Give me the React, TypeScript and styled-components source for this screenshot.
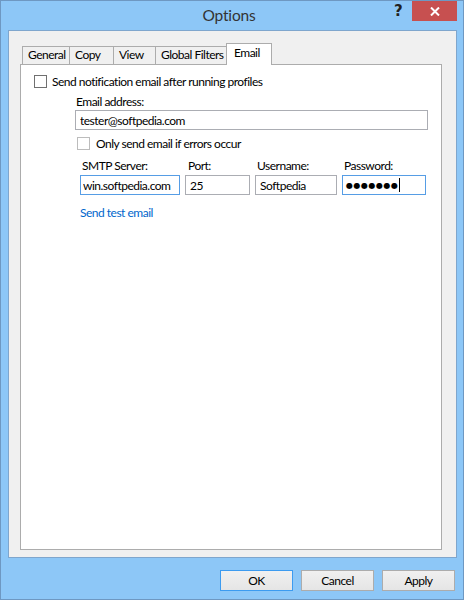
import React from "react";
import styled, { createGlobalStyle } from "styled-components";

const Global = createGlobalStyle`
  html, body { margin: 0; padding: 0; }
  body { font-family: Lato, "Noto Sans", sans-serif; font-size: 12px; letter-spacing: -0.5px; color: #000; }
  * { box-sizing: border-box; }
`;

const Window = styled.div`
  width: 464px;
  height: 600px;
  background: #8dc7f7;
  border: 1px solid #6e98c2;
  display: flex;
  flex-direction: column;
`;

const TitleBar = styled.div`
  height: 29px;
  flex: none;
  display: grid;
  grid-template-columns: 1fr auto 1fr;
  padding-right: 6px;
`;

const Title = styled.div`
  grid-column: 2;
  font-size: 15.5px;
  letter-spacing: -0.2px;
  line-height: 29px;
  color: #333;
`;

const Controls = styled.div`
  grid-column: 3;
  display: flex;
  justify-content: flex-end;
  align-items: flex-start;
`;

const HelpButton = styled.div`
  width: 28px;
  height: 20px;
  display: flex;
  align-items: center;
  justify-content: center;
  font-weight: bold;
  font-size: 15px;
  color: #222;
  font-family: "DejaVu Sans", sans-serif;
`;

const CloseButton = styled.div`
  width: 45px;
  height: 20px;
  background: #c75050;
  display: flex;
  align-items: center;
  justify-content: center;
`;

const Client = styled.div`
  margin-left: 7px;
  width: 449px;
  height: 528px;
  flex: none;
  background: #f0f0f0;
  border: 1px solid #7fa6cd;
  padding: 12px 14px 7px 11px;
  display: flex;
  flex-direction: column;
`;

const TabRow = styled.div`
  display: flex;
  align-items: flex-end;
  height: 21px;
  padding-left: 2px;
  flex: none;
`;

const Tab = styled.div<{ $w: number; $active?: boolean }>`
  width: ${(p) => p.$w}px;
  height: ${(p) => (p.$active ? 22 : 18)}px;
  margin-bottom: ${(p) => (p.$active ? -1 : 0)}px;
  margin-left: -1px;
  &:first-child { margin-left: 0; }
  background: ${(p) => (p.$active ? "#fff" : "#f0f0f0")};
  border: 1px solid #acacac;
  border-bottom: none;
  position: relative;
  z-index: ${(p) => (p.$active ? 1 : 0)};
  padding-left: ${(p) => (p.$active ? 7 : 5)}px;
  padding-top: ${(p) => (p.$active ? 1 : 0)}px;
  line-height: 16px;
  white-space: nowrap;
`;

const Panel = styled.div`
  flex: 1;
  background: #fff;
  border: 1px solid #acacac;
  padding: 10px 13px;
  display: flex;
  flex-direction: column;
`;

const CheckRow = styled.label<{ $indent?: number; $gap?: number }>`
  display: flex;
  align-items: center;
  gap: ${(p) => p.$gap ?? 5}px;
  height: 13px;
  margin-left: ${(p) => p.$indent ?? 0}px;
  line-height: 16px;
`;

const Box = styled.span<{ $disabled?: boolean }>`
  width: 13px;
  height: 13px;
  border: 1px solid ${(p) => (p.$disabled ? "#bcbcbc" : "#707070")};
  background: #fff;
  flex: none;
`;

const Indented = styled.div`
  margin-left: 41px;
  margin-top: 6px;
  display: flex;
  flex-direction: column;
`;

const FieldLabel = styled.div<{ $pad?: number }>`
  line-height: 16px;
  padding-left: ${(p) => p.$pad ?? 1}px;
  color: #000;
`;

const TextBox = styled.input<{ $focus?: boolean; $pad?: number }>`
  width: 100%;
  height: 20px;
  border: 1px solid ${(p) => (p.$focus ? "#569de5" : "#abadb3")};
  padding: 0 0 0 ${(p) => p.$pad ?? 4}px;
  font: inherit;
  font-size: 12px;
  letter-spacing: inherit;
  color: #000;
  background: #fff;
  outline: none;
`;

const Spacer = styled.div<{ $h: number }>`
  height: ${(p) => p.$h}px;
`;

const PasswordBox = styled.div`
  height: 20px;
  border: 1px solid #569de5;
  padding: 0 3px;
  display: flex;
  align-items: center;
  background: #fff;
`;

const Dots = styled.span`
  font-family: "DejaVu Sans", sans-serif;
  font-size: 8px;
  letter-spacing: 0.5px;
  color: #000;
`;

const Caret = styled.span`
  width: 1px;
  height: 14px;
  background: #000;
  margin-left: 1px;
`;

const Fields = styled.div`
  margin-top: 8px;
  margin-left: 5px;
  display: grid;
  grid-template-columns: 100px 65px 82px 84px;
  column-gap: 5px;
  row-gap: 1px;
`;

const Link = styled.a`
  margin-top: 10px;
  margin-left: 5px;
  line-height: 16px;
  color: #0066cc;
  text-decoration: none;
  cursor: pointer;
`;

const ButtonRow = styled.div`
  margin-top: 12px;
  padding-right: 8px;
  display: flex;
  justify-content: flex-end;
  gap: 8px;
`;

const Button = styled.button<{ $default?: boolean }>`
  width: 73px;
  height: 21px;
  border: 1px solid ${(p) => (p.$default ? "#3c9bf0" : "#acacac")};
  background: linear-gradient(#f0f0f0, #e5e5e5);
  font: inherit;
  font-size: 12px;
  letter-spacing: inherit;
  color: #000;
  padding: 0;
`;

export default function App() {
  return (
    <>
      <Global />
      <Window>
        <TitleBar>
          <Title>Options</Title>
          <Controls>
            <HelpButton>?</HelpButton>
            <CloseButton>
              <svg width="10" height="9" viewBox="0 0 10 9">
                <path d="M1 0.5 L9 8.5 M9 0.5 L1 8.5" stroke="#fff" strokeWidth="2" />
              </svg>
            </CloseButton>
          </Controls>
        </TitleBar>
        <Client>
          <TabRow>
            <Tab $w={48}>General</Tab>
            <Tab $w={45}>Copy</Tab>
            <Tab $w={43}>View</Tab>
            <Tab $w={72}>Global Filters</Tab>
            <Tab $w={46} $active>Email</Tab>
          </TabRow>
          <Panel>
            <CheckRow $gap={5}>
              <Box />
              Send notification email after running profiles
            </CheckRow>
            <Indented>
              <FieldLabel>Email address:</FieldLabel>
              <TextBox readOnly value="tester@softpedia.com" />
              <Spacer $h={7} />
              <CheckRow $indent={2} $gap={6}>
                <Box $disabled />
                Only send email if errors occur
              </CheckRow>
              <Fields>
                <FieldLabel $pad={2}>SMTP Server:</FieldLabel>
                <FieldLabel $pad={3}>Port:</FieldLabel>
                <FieldLabel $pad={2}>Username:</FieldLabel>
                <FieldLabel $pad={2}>Password:</FieldLabel>
                <TextBox $focus $pad={2} readOnly value="win.softpedia.com" />
                <TextBox readOnly value="25" />
                <TextBox readOnly value="Softpedia" />
                <PasswordBox>
                  <Dots>●●●●●●●</Dots>
                  <Caret />
                </PasswordBox>
              </Fields>
              <Link>Send test email</Link>
            </Indented>
          </Panel>
        </Client>
        <ButtonRow>
          <Button $default>OK</Button>
          <Button>Cancel</Button>
          <Button>Apply</Button>
        </ButtonRow>
      </Window>
    </>
  );
}
